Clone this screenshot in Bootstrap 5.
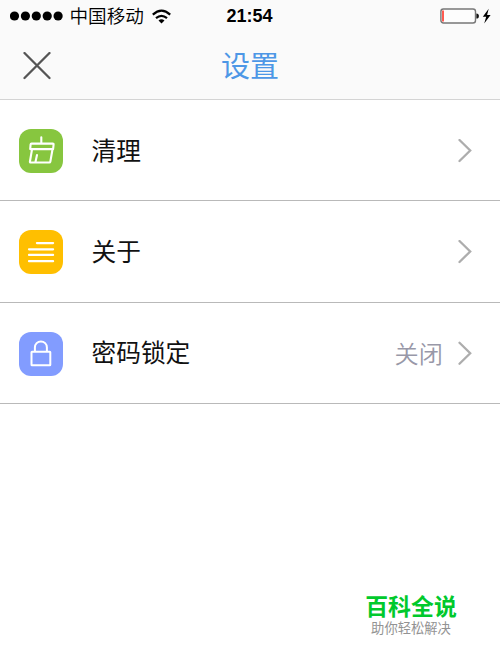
<!DOCTYPE html>
<html lang="zh-CN">
<head>
<meta charset="utf-8">
<meta name="viewport" content="width=device-width, initial-scale=1">
<title>设置</title>
<link href="https://cdn.jsdelivr.net/npm/bootstrap@5.3.0/dist/css/bootstrap.min.css" rel="stylesheet">
<style>
body { font-family: "Liberation Sans", "Noto Sans CJK SC", sans-serif; height: 666px; overflow: hidden; color: #111; }
svg { display: block; flex: none; }
.top-area { height: 100px; background: #fafafa; border-bottom: 1px solid #d4d4d4; }
.status-bar { height: 32px; padding: 0 8px 0 10px; }
.status-side { flex: 1 1 0; }
.carrier { font-size: 18.6px; font-weight: 350; line-height: 32px; margin: 0 8px 0 6.5px; padding-top: 2px; color: #000; }
.clock { font-size: 18px; font-weight: 700; line-height: 32px; margin-right: 3px; color: #000; }
.title-bar { height: 67px; padding: 0 23px; }
.page-title { font-size: 29px; font-weight: 400; line-height: 67px; margin-right: 28px; padding-top: 3px; color: #4d97e6; }
.setting-row { height: 101.3px; border-bottom: 1px solid #b9b9b9; padding: 1px 28px 0 18.5px; }
.tile { width: 44px; height: 44px; border-radius: 12px; margin: 1px 29px 0 0; flex: none; }
.tile-green { background: #87c63f; }
.tile-amber { background: #ffbf00; }
.tile-blue { background: #829cff; }
.row-label { font-size: 24.7px; font-weight: 400; line-height: 36px; padding-top: 2px; }
.row-value { font-size: 24.2px; font-weight: 350; line-height: 36px; color: #9898a8; margin-right: 15px; padding-top: 3px; }
.brand { width: 110px; margin: 188px 34px 0 auto; }
.brand-name { font-size: 22.9px; font-weight: 700; line-height: 30px; color: #00c92c; }
.brand-sub { font-size: 13.3px; line-height: 13px; color: #939393; }
</style>
<script src="https://cdn.jsdelivr.net/npm/bootstrap@5.3.0/dist/js/bootstrap.bundle.min.js"></script>
</head>
<body class="bg-white">
<header class="top-area">
  <div class="status-bar d-flex align-items-center">
    <div class="status-side d-flex align-items-center">
      <svg width="53" height="10" viewBox="0 0 53 10"><g fill="#000"><circle cx="4.5" cy="5" r="4.6"/><circle cx="15.4" cy="5" r="4.6"/><circle cx="26.3" cy="5" r="4.6"/><circle cx="37.2" cy="5" r="4.6"/><circle cx="48.1" cy="5" r="4.6"/></g></svg>
      <span class="carrier text-nowrap">中国移动</span>
      <svg width="19" height="15" viewBox="0 0 19 15" fill="none" stroke="#000" stroke-width="2.2"><path d="M.8 5.6Q9.5-2.2 18.2 5.6M4 9.1Q9.5 4.5 15 9.1"/><path d="M6.5 11.4Q9.5 8.9 12.5 11.4L9.5 14.6z" fill="#000" stroke="none"/></svg>
    </div>
    <div class="clock">21:54</div>
    <div class="status-side d-flex align-items-center justify-content-end">
      <svg width="52" height="18" viewBox="0 0 52 18"><rect x=".9" y="2" width="34.6" height="14" rx="2.5" fill="#fdfdfd" stroke="#777" stroke-width="1.4"/><path d="M2 3.5h2v11H2z" fill="#ff5a50"/><path d="M36.4 6.4q2.5 0 2.5 2.6t-2.5 2.6z" fill="#111"/><path d="M48.7 1.7 42.8 9.7h3.4l-2 6.8 6.4-8.4h-3.5z" fill="#000"/></svg>
    </div>
  </div>
  <div class="title-bar d-flex align-items-center">
    <svg width="28" height="28" viewBox="0 0 28 28" fill="none" stroke="#555" stroke-width="2.3" stroke-linecap="round"><path d="M1.5 1l25 25M26.5 1l-25 25"/></svg>
    <h1 class="page-title flex-grow-1 text-center mb-0">设置</h1>
  </div>
</header>
<main>
  <div class="setting-row d-flex align-items-center">
    <div class="tile tile-green"><svg width="44" height="44" viewBox="0 0 44 44" fill="none" stroke="#fff" stroke-width="2.1" stroke-linecap="round" stroke-linejoin="round"><path d="M22.3 8.2v6.3M12.4 14.6h21.4q.9 0 .8.8l-.5 4.7H11.2l.4-4.7q.1-.8.8-.8zM13 20.5l-2.1 12.2q-.1.8.7.8h18.7q.8 0 1-.8l2.2-12.2M18 26l-1.6 7.2"/></svg></div>
    <div class="row-label flex-grow-1">清理</div>
    <svg width="14" height="24" viewBox="0 0 14 24" fill="none" stroke="#adadad" stroke-width="2.3" stroke-linecap="round"><path d="M1.5 1 12.2 11.5 1.5 22"/></svg>
  </div>
  <div class="setting-row d-flex align-items-center">
    <div class="tile tile-amber"><svg width="44" height="44" viewBox="0 0 44 44" fill="none" stroke="#fff" stroke-width="2.2" stroke-linecap="round"><path d="M17.9 13.1h16.2M10 19.3h24.1M10 24.9h24.1M10 31.2h24.1"/></svg></div>
    <div class="row-label flex-grow-1">关于</div>
    <svg width="14" height="24" viewBox="0 0 14 24" fill="none" stroke="#adadad" stroke-width="2.3" stroke-linecap="round"><path d="M1.5 1 12.2 11.5 1.5 22"/></svg>
  </div>
  <div class="setting-row d-flex align-items-center">
    <div class="tile tile-blue"><svg width="44" height="44" viewBox="0 0 44 44" fill="none" stroke="#fff" stroke-width="2" stroke-linejoin="round"><rect x="12.5" y="19.7" width="18.8" height="13.5" rx=".5"/><path d="M15.9 19.7v-4.3a6 6 0 0 1 12 0v4.3"/></svg></div>
    <div class="row-label flex-grow-1">密码锁定</div>
    <div class="row-value">关闭</div>
    <svg width="14" height="24" viewBox="0 0 14 24" fill="none" stroke="#adadad" stroke-width="2.3" stroke-linecap="round"><path d="M1.5 1.7 12.2 12.2 1.5 22.7"/></svg>
  </div>
</main>
<footer class="brand text-center text-nowrap">
  <div class="brand-name">百科全说</div>
  <div class="brand-sub">助你轻松解决</div>
</footer>
</body>
</html>
